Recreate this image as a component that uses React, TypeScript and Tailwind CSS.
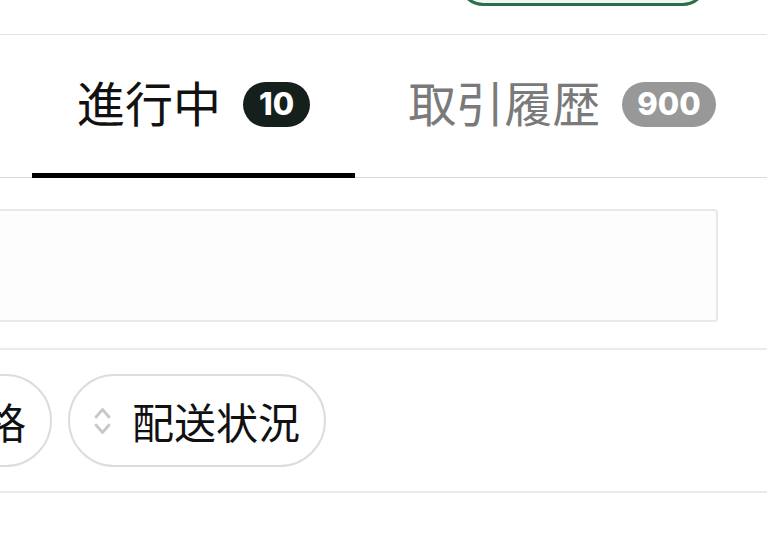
import React from 'react';

interface TabProps {
    label: string
    count: number
    active: boolean
}

interface ChipProps {
    label: string
}

const Tab: React.FC<TabProps> = (props) => {
    const { label, count, active } = props;
    return (
        <div className="relative flex items-center gap-[22px] px-[45px] pb-[4px]">
            <span className={active ? 'pb-[6px] text-[48px] leading-none text-[#111111]' : 'pb-[6px] text-[48px] leading-none text-[#7a7a7a]'}>{label}</span>
            <span className={active
                ? 'flex h-[45px] items-center rounded-full bg-[#15201c] px-[16px] font-["Inter",sans-serif] text-[31px] font-extrabold text-white'
                : 'flex h-[45px] items-center rounded-full bg-[#989898] px-[15px] font-["Inter",sans-serif] text-[31px] font-extrabold text-white'}>
                {count}
            </span>
            {active && <div className="absolute inset-x-0 bottom-[-1px] h-[5px] bg-black" />}
        </div>
    );
}

const SortIcon = () => (
    <svg width="17" height="28" viewBox="0 0 17 28" fill="none" stroke="#c8c8c8" strokeWidth="2.8" strokeLinecap="round" strokeLinejoin="round">
        <path d="M2 10 L8.5 2.5 L15 10" />
        <path d="M2 18 L8.5 25.5 L15 18" />
    </svg>
);

const Chip: React.FC<ChipProps> = (props) => {
    const { label } = props;
    return (
        <div className="flex h-[93px] shrink-0 items-center gap-[21px] rounded-full border-2 border-[#dddddd] px-[24px]">
            <SortIcon />
            <span className="text-[42px] leading-none text-[#111111]">{label}</span>
        </div>
    );
}

const App: React.FC = () => {
    return (
        <div className="h-[540px] w-[767px] overflow-hidden bg-white font-['Noto_Sans_CJK_JP','Noto_Sans',sans-serif]">
            {/* header (button cut off at top) */}
            <div className="flex h-[35px] items-start border-b border-[#e2e2e2]">
                <div className="ml-[458px] mt-[-45px] h-[51px] w-[250px] shrink-0 rounded-full border-[3px] border-[#2b6f49] bg-[#f1f8f3]" />
            </div>

            {/* tabs */}
            <div className="flex h-[143px] gap-[8px] border-b border-[#dadada] pl-[32px]">
                <Tab label="進行中" count={10} active={true} />
                <Tab label="取引履歴" count={900} active={false} />
            </div>

            {/* search box */}
            <div className="border-b-2 border-[#ebebeb] pb-[26px] pt-[31px]">
                <div className="ml-[-40px] h-[113px] w-[758px] rounded-[4px] border-2 border-[#e8e8e8] bg-[#fdfdfd]" />
            </div>

            {/* sort chips */}
            <div className="flex h-[143px] items-center border-b-2 border-[#ebebeb]">
                <div className="ml-[-122px] flex gap-[16px]">
                    <Chip label="価格" />
                    <Chip label="配送状況" />
                </div>
            </div>
        </div>
    );
}
export default App;
